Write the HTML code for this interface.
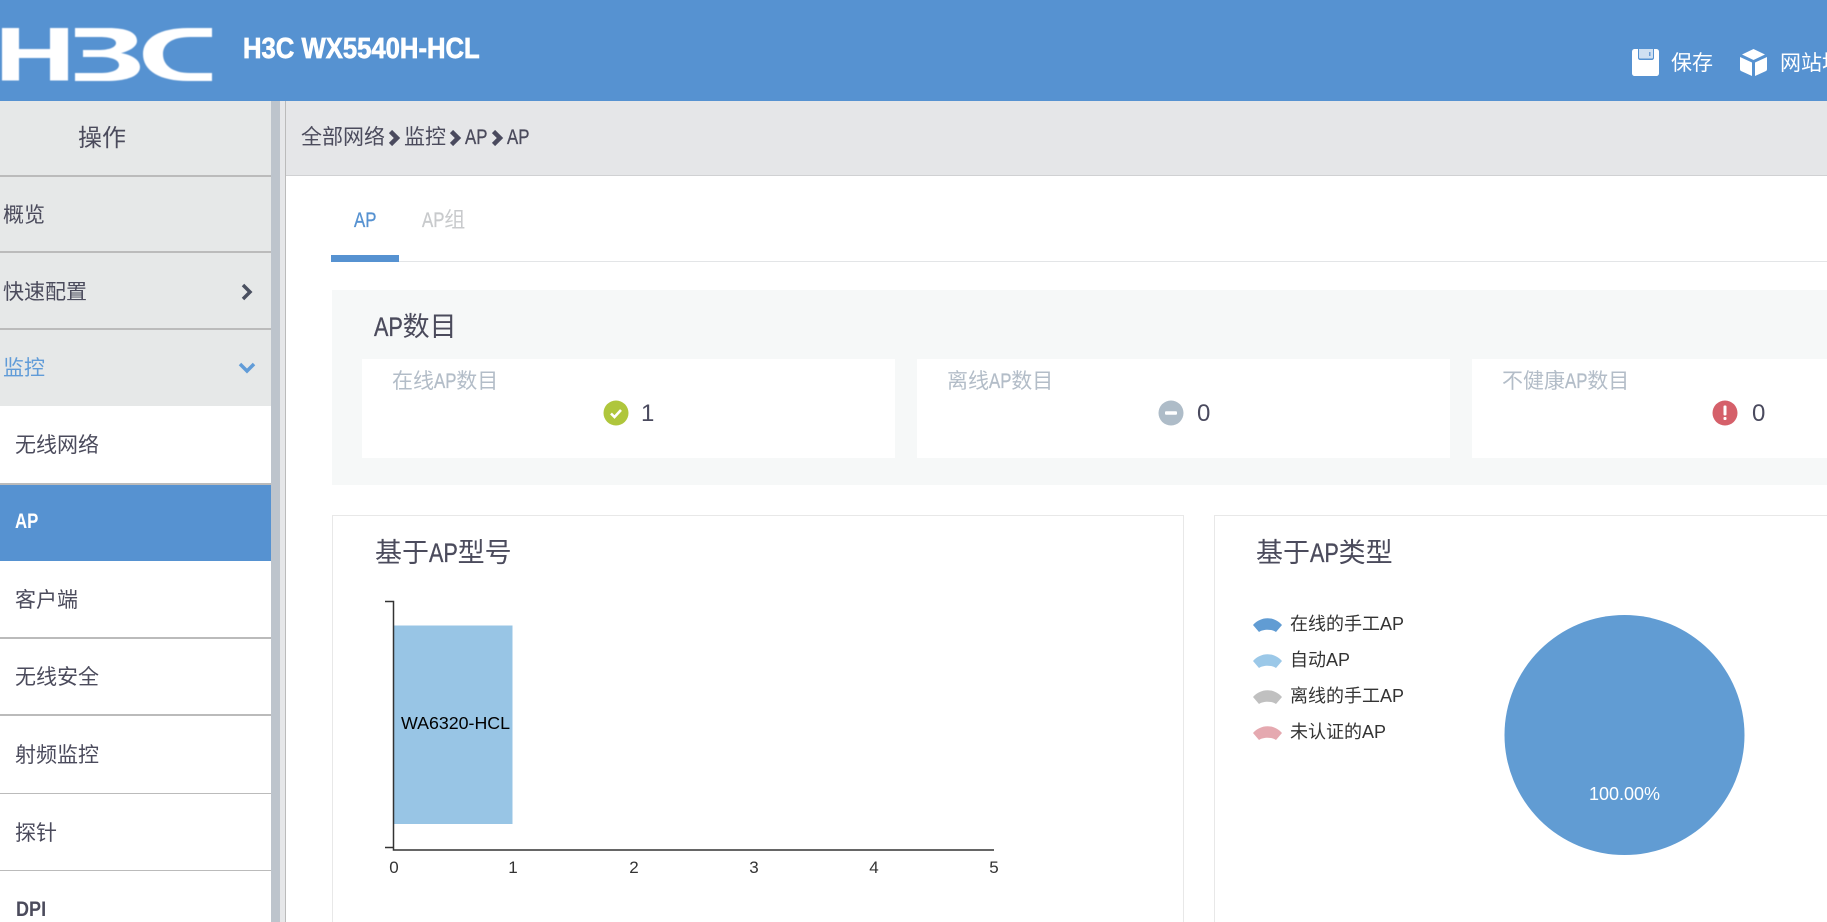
<!DOCTYPE html>
<html lang="zh-CN">
<head>
<meta charset="utf-8">
<title>H3C WX5540H-HCL</title>
<style>
html,body{margin:0;padding:0;width:1827px;height:922px;overflow:hidden;background:#fff}
body{position:relative;font-family:"Liberation Sans","Noto Sans CJK SC",sans-serif;color:#4b4b5c}
div,span,svg{box-sizing:border-box}
.a{position:absolute}
.t{position:absolute;white-space:nowrap;font-size:21px;line-height:30px;height:30px}
.c{display:inline-block;width:1.06em;transform:scaleX(.8);transform-origin:0 50%;-webkit-text-stroke:.35px currentColor}
.row{position:absolute;left:0;width:271px;border-bottom:2px solid #bbb}
.h2{font-size:27px;line-height:36px;height:36px}
.lab{color:#b3bdc8}
.num{font-size:24px;color:#4a4a5e}
.lg{font-size:18px;color:#333;line-height:26px;height:26px}
.tick{position:absolute;font-size:17px;color:#333;line-height:20px;width:20px;text-align:center;top:858px}
</style>
</head>
<body>
<!-- header -->
<div class="a" style="left:0;top:0;width:1827px;height:101px;background:#5692d1"></div>
<svg class="a" style="left:0;top:0;filter:blur(.4px)" width="230" height="100" viewBox="0 0 230 100">
<path fill="#fff" d="M2 28H19V49H50V28H68V80.500H50V58H19V80.500H2Z"/>
<path fill="#fff" d="M75 28H108C128 28 137 33 137 41C137 47 129 51 121 53C132 55 140 60 140 67C140 76 128 81 105 81H75V73H100C112 73 119 70 119 65C119 60 112 57 100 57H83V50H98C110 50 116 47 116 43C116 39 110 37 100 37H75Z"/>
<path fill="#fff" d="M212 28H188C160 28 143 38 143 54C143 71 160 81 188 81H212V73H190C172 73 163 65 163 54C163 44 172 37 190 37H212Z"/>
</svg>
<div class="t" style="left:243px;top:31px;height:36px;line-height:36px;font-size:29px;font-weight:bold;color:#fff;-webkit-text-stroke:.7px #fff;transform:scaleX(.885);transform-origin:0 50%">H3C WX5540H-HCL</div>
<svg class="a" style="left:1632px;top:49px" width="27" height="27" viewBox="0 0 27 27">
<path fill="#fff" d="M3 0H6V9C6 10 7 11 8 11H20C21 11 22 10 22 9V0H24C26 0 27 1 27 3V24C27 26 26 27 24 27H3C1 27 0 26 0 24V3C0 1 1 0 3 0Z"/>
<path fill="#cfe0f2" d="M7 0H21V8.500C21 9 20.500 9.500 20 9.500H8C7.500 9.500 7 9 7 8.500Z"/>
<rect x="17" y="3" width="1.500" height="4" fill="#6f9fd6"/>
</svg>
<div class="t" style="left:1671px;top:49px;color:#fff">保存</div>
<svg class="a" style="left:1740px;top:49px" width="27" height="27" viewBox="0 0 27 27">
<path fill="#fff" d="M13.500 0L25 5.500L13.500 11L2 5.500Z"/>
<path fill="#fff" d="M0 8L12 13.500V27L1 22C.3 21.500 0 21 0 20Z"/>
<path fill="#fff" d="M27 8L15 13.500V27L26 22C26.700 21.500 27 21 27 20Z"/>
</svg>
<div class="t" style="left:1780px;top:49px;color:#fff">网站地图</div>

<!-- sidebar -->
<div class="a" style="left:0;top:101px;width:271px;height:821px;background:#e6e8e8"></div>
<div class="a" style="left:271px;top:101px;width:9px;height:821px;background:#bdc4cc"></div>
<div class="a" style="left:280px;top:101px;width:5px;height:821px;background:#e6e7e9"></div>
<div class="a" style="left:285px;top:101px;width:1px;height:821px;background:#bbb"></div>

<div class="row" style="top:101px;height:76px"></div>
<div class="row" style="top:177px;height:76px"></div>
<div class="row" style="top:253px;height:77px"></div>
<div class="a" style="left:0;top:406px;width:271px;height:516px;background:#fff"></div>
<div class="row" style="top:406px;height:79px"></div>
<div class="a" style="left:0;top:485px;width:271px;height:76px;background:#5692d1"></div>
<div class="row" style="top:561px;height:78px"></div>
<div class="row" style="top:639px;height:77px"></div>
<div class="row" style="top:716px;height:78px;border-bottom-width:1px"></div>
<div class="row" style="top:794px;height:77px;border-bottom-width:1px"></div>

<div class="t" style="left:78px;top:123px;font-size:24px;line-height:32px;height:32px">操作</div>
<div class="t" style="left:3px;top:201px">概览</div>
<div class="t" style="left:3px;top:278px">快速配置</div>
<svg class="a" style="left:241px;top:283px" width="12" height="18" viewBox="0 0 12 18"><path d="M2 2L9 9L2 16" fill="none" stroke="#4a5060" stroke-width="3.500"/></svg>
<div class="t" style="left:3px;top:354px;color:#619cd8">监控</div>
<svg class="a" style="left:238px;top:361px" width="18" height="14" viewBox="0 0 18 14"><path d="M2 3L9 10L16 3" fill="none" stroke="#619cd8" stroke-width="3.500"/></svg>
<div class="t" style="left:15px;top:431px">无线网络</div>
<div class="t" style="left:15px;top:507px;color:#fff;font-weight:bold"><span class="c" style="-webkit-text-stroke:0">AP</span></div>
<div class="t" style="left:15px;top:586px">客户端</div>
<div class="t" style="left:15px;top:663px">无线安全</div>
<div class="t" style="left:15px;top:741px">射频监控</div>
<div class="t" style="left:15px;top:819px">探针</div>
<div class="t" style="left:16px;top:895px;font-weight:bold"><span class="c" style="width:1.6em;transform:scaleX(.86);-webkit-text-stroke:0">DPI</span></div>

<!-- breadcrumb -->
<div class="a" style="left:286px;top:101px;width:1541px;height:75px;background:#e5e6e8;border-bottom:1px solid #d0d1d3"></div>
<div class="t" style="left:301px;top:123px">全部网络</div>
<svg class="a" style="left:388px;top:130px" width="13" height="16" viewBox="0 0 13 16"><path d="M2.500 1.500L9 8L2.500 14.500" fill="none" stroke="#4a4a5e" stroke-width="4.500"/></svg>
<div class="t" style="left:404px;top:123px">监控</div>
<svg class="a" style="left:449px;top:130px" width="13" height="16" viewBox="0 0 13 16"><path d="M2.500 1.500L9 8L2.500 14.500" fill="none" stroke="#4a4a5e" stroke-width="4.500"/></svg>
<div class="t" style="left:465px;top:123px"><span class="c">AP</span></div>
<svg class="a" style="left:491px;top:130px" width="13" height="16" viewBox="0 0 13 16"><path d="M2.500 1.500L9 8L2.500 14.500" fill="none" stroke="#4a4a5e" stroke-width="4.500"/></svg>
<div class="t" style="left:507px;top:123px"><span class="c">AP</span></div>

<!-- tabs -->
<div class="t" style="left:354px;top:206px;color:#5692d1"><span class="c">AP</span></div>
<div class="t" style="left:422px;top:206px;color:#c8cacc"><span class="c">AP</span>组</div>
<div class="a" style="left:331px;top:261px;width:1496px;height:1px;background:#e3e5e7"></div>
<div class="a" style="left:331px;top:255px;width:68px;height:7px;background:#5692d1"></div>

<!-- AP count panel -->
<div class="a" style="left:332px;top:290px;width:1495px;height:195px;background:#f6f8f8"></div>
<div class="t h2" style="left:374px;top:309px"><span class="c">AP</span>数目</div>
<div class="a" style="left:362px;top:359px;width:533px;height:99px;background:#fff"></div>
<div class="a" style="left:917px;top:359px;width:533px;height:99px;background:#fff"></div>
<div class="a" style="left:1472px;top:359px;width:355px;height:99px;background:#fff"></div>
<div class="t lab" style="left:392px;top:367px">在线<span class="c">AP</span>数目</div>
<div class="t lab" style="left:947px;top:367px">离线<span class="c">AP</span>数目</div>
<div class="t lab" style="left:1502px;top:367px">不健康<span class="c">AP</span>数目</div>

<svg class="a" style="left:603px;top:400px" width="26" height="26" viewBox="0 0 26 26"><circle cx="13" cy="13" r="12.500" fill="#afc63c"/><path d="M8 13.500L11.500 17L18 10" fill="none" stroke="#fff" stroke-width="2.600"/></svg>
<div class="t num" style="left:641px;top:399px">1</div>
<svg class="a" style="left:1158px;top:400px" width="26" height="26" viewBox="0 0 26 26"><circle cx="13" cy="13" r="12.500" fill="#aebcc8"/><rect x="7" y="11.300" width="12" height="3.400" rx="1" fill="#fff"/></svg>
<div class="t num" style="left:1197px;top:399px">0</div>
<svg class="a" style="left:1712px;top:400px" width="26" height="26" viewBox="0 0 26 26"><circle cx="13" cy="13" r="12.500" fill="#d5606a"/><rect x="11.500" y="5.500" width="3" height="10" rx="1" fill="#fff"/><rect x="11.500" y="17" width="3" height="3" rx="1" fill="#fff"/></svg>
<div class="t num" style="left:1752px;top:399px">0</div>

<!-- box 1 -->
<div class="a" style="left:332px;top:515px;width:852px;height:420px;border:1px solid #e8e8e8;background:#fff"></div>
<div class="t h2" style="left:375px;top:535px">基于<span class="c">AP</span>型号</div>
<svg class="a" style="left:380px;top:595px" width="620" height="260" viewBox="380 595 620 260">
<rect x="394" y="625.500" width="118.500" height="198.500" fill="#98c5e5"/>
<path d="M385 601.500H393.500V850H994M385 847.500H393.500" fill="none" stroke="#333" stroke-width="1.500"/>
</svg>
<div class="t" style="left:401px;top:708px;font-size:17.800px;color:#000">WA6320-HCL</div>
<div class="tick" style="left:384px">0</div>
<div class="tick" style="left:503px">1</div>
<div class="tick" style="left:624px">2</div>
<div class="tick" style="left:744px">3</div>
<div class="tick" style="left:864px">4</div>
<div class="tick" style="left:984px">5</div>

<!-- box 2 -->
<div class="a" style="left:1214px;top:515px;width:620px;height:420px;border:1px solid #e8e8e8;background:#fff"></div>
<div class="t h2" style="left:1256px;top:535px">基于<span class="c">AP</span>类型</div>
<svg class="a" style="left:1253px;top:615px" width="30" height="130" viewBox="0 0 30 130">
<path fill="#619cd3" d="M0 10C8 1 21 1 29 10L23 17C19 14 10 14 6 17Z"/>
<path fill="#9bc8e8" d="M0 46C8 37 21 37 29 46L23 53C19 50 10 50 6 53Z"/>
<path fill="#c0c0c0" d="M0 82C8 73 21 73 29 82L23 89C19 86 10 86 6 89Z"/>
<path fill="#e5a9b0" d="M0 118C8 109 21 109 29 118L23 125C19 122 10 122 6 125Z"/>
</svg>
<div class="t lg" style="left:1290px;top:611px">在线的手工AP</div>
<div class="t lg" style="left:1290px;top:647px">自动AP</div>
<div class="t lg" style="left:1290px;top:683px">离线的手工AP</div>
<div class="t lg" style="left:1290px;top:719px">未认证的AP</div>
<svg class="a" style="left:1504px;top:615px" width="241" height="241" viewBox="0 0 241 241"><circle cx="120.500" cy="120" r="120" fill="#619cd3"/></svg>
<div class="t" style="left:1589px;top:779px;font-size:18px;color:#fff">100.00%</div>
</body>
</html>
